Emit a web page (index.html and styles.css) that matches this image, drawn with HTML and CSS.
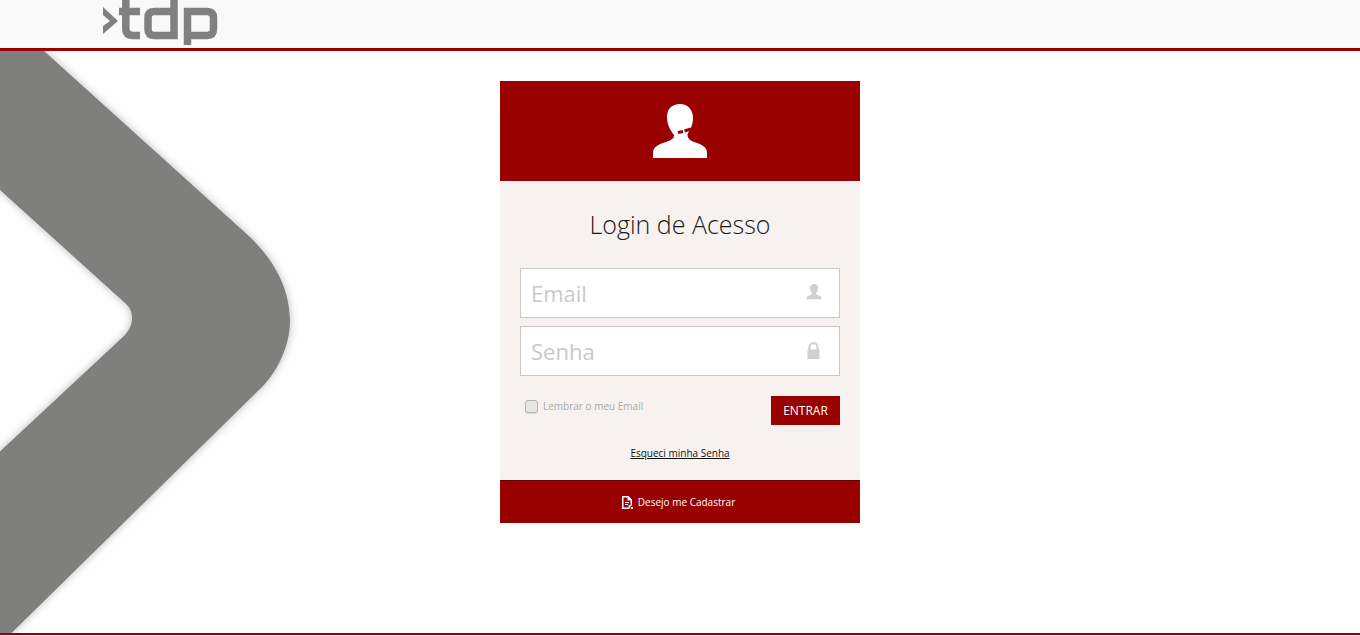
FILE: index.html
```html
<!DOCTYPE html>
<html lang="pt-BR">
<head>
<meta charset="utf-8">
<title>Login de Acesso</title>
<link rel="stylesheet" href="styles.css">
</head>
<body>
<header class="top">
  <svg class="logo" width="116" height="46" viewBox="0 0 116 46" role="img" aria-label="tdp">
    <polygon fill="#808080" points="0,7 15,21 0,34 0,26 7,21 0,15"/>
    <g fill="none" stroke="#808080" stroke-width="7.500">
      <path d="M22.800 -6V28Q22.800 35.500 30 35.500H37"/>
      <line x1="16" y1="11.500" x2="37" y2="11.500"/>
      <path d="M71 -6V35.500H51Q45 35.500 45 29V18Q45 11.500 51 11.500H71"/>
      <path d="M84.500 45V11.500H104Q110.500 11.500 110.500 18V29Q110.500 35.500 104 35.500H84.500"/>
    </g>
  </svg>
</header>
<main class="stage">
  <svg class="chevron" width="310" height="582" viewBox="0 0 310 582" aria-hidden="true">
    <defs>
      <filter id="soft" x="-10%" y="-10%" width="120%" height="120%">
        <feDropShadow dx="0" dy="0" stdDeviation="4" flood-color="#000" flood-opacity="0.28"/>
      </filter>
    </defs>
    <path filter="url(#soft)" fill="#7f7f7d" d="M-20 -10H33L250 186C272 207 290 236 290 270C290 294 278 320 262 336L-20 613V419L125 284C129 279 132 274 132 267C132 260 129 255 125 252L-20 121Z"/>
  </svg>
  <section class="card">
    <div class="card-head">
      <svg width="56" height="56" viewBox="0 0 56 56" aria-hidden="true">
        <path fill="#fff" d="M28 1C36 1 41 7 41 15C41 22 38 27 35.500 31C35.500 35 37 37 42 39C48 41 55 43 55 50V55H1V50C1 43 8 41 14 39C19 37 22 36 22 32C18 27 15 21 15 14C15 6 20 1 28 1Z"/>
        <path fill="none" stroke="#990000" stroke-width="3" d="M26 29.500L31 28.500M32.500 28L39 26"/>
      </svg>
    </div>
    <form class="card-body">
      <h1 class="title">Login de Acesso</h1>
      <label class="field">
        <input class="input" type="text" placeholder="Email">
        <svg class="field-icon" width="16" height="16" viewBox="0 0 16 16" aria-hidden="true"><path fill="#d0d0d0" d="M8 0C10.500 0 12 1.700 12 4C12 6 11 7.800 10 9C10 10.200 11 10.800 12.500 11.300C14.500 12 15.500 12.500 15.500 15.200H.5C.5 12.500 1.500 12 3.500 11.300C5 10.800 6 10.200 6 9C5 7.800 4 6 4 4C4 1.700 5.500 0 8 0Z"/></svg>
      </label>
      <label class="field">
        <input class="input" type="password" placeholder="Senha">
        <svg class="field-icon" width="16" height="18" viewBox="0 0 16 18" aria-hidden="true"><path fill="none" stroke="#d0d0d0" stroke-width="2.200" d="M3.500 8V5.500C3.500 3 5.200 1.200 7.500 1.200S11.500 3 11.500 5.500V8"/><rect x="1.500" y="7.500" width="12" height="9.500" fill="#d0d0d0"/></svg>
      </label>
      <div class="actions">
        <label class="remember"><input class="check" type="checkbox"><span>Lembrar o meu Email</span></label>
        <button class="enter" type="button">ENTRAR</button>
      </div>
      <a class="forgot" href="#">Esqueci minha Senha</a>
    </form>
    <a class="signup" href="#">
      <svg width="11" height="13" viewBox="0 0 11 13" aria-hidden="true"><path fill="#fff" d="M0 0H6.500L10 3.500V9.500H8.500V11.500H7.500V13H0ZM1.500 1.500V11.500H6.500V9H8.500V4.500H5.500V1.500Z"/><path fill="#fff" d="M3 6H7V7H3ZM3 8H6V9H3Z"/><rect x="9" y="11" width="2" height="2" fill="#fff"/></svg>
      <span>Desejo me Cadastrar</span>
    </a>
  </section>
</main>
</body>
</html>
```
FILE: styles.css
```css
* { box-sizing: border-box; }
html, body { height: 100%; }
body {
  margin: 0;
  display: flex;
  flex-direction: column;
  height: 635px;
  overflow: hidden;
  background: #fff;
  font-family: "Open Sans", sans-serif;
}
.top {
  flex: none;
  height: 51px;
  padding-left: 103px;
  background: #f9f9f9;
  border-bottom: 3px solid #990000;
  overflow: hidden;
}
.logo { display: block; }
.stage {
  flex: 1;
  position: relative;
  display: flex;
  justify-content: center;
  align-items: flex-start;
  padding-top: 30px;
  border-bottom: 2px solid #990000;
  overflow: hidden;
}
.chevron { position: absolute; left: 0; top: 0; }
.card { position: relative; width: 360px; }
.card-head {
  height: 100px;
  background: #990000;
  display: flex;
  align-items: center;
  justify-content: center;
}
.card-head svg { display: block; }
.card-body {
  height: 299px;
  padding: 26px 20px 0;
  background: #f7f2f0;
  display: flex;
  flex-direction: column;
}
.title {
  margin: 0 0 27px;
  font-size: 25px;
  line-height: 34px;
  font-weight: 300;
  text-align: center;
  color: #1a1a1a;
}
.field { position: relative; display: block; margin-bottom: 8px; }
.input {
  display: block;
  width: 100%;
  height: 50px;
  padding: 0 40px 0 10px;
  border: 1px solid #c8c6c6;
  background: #fff;
  font: 22px "Open Sans", sans-serif;
  color: #555;
  outline: none;
}
.input::placeholder { color: #c9c9c9; opacity: 1; }
.field-icon { position: absolute; right: 18px; top: 16px; }
.actions {
  display: flex;
  justify-content: space-between;
  align-items: flex-start;
  margin-top: 12px;
}
.remember {
  display: flex;
  align-items: center;
  gap: 5px;
  margin: 3px 0 0 5px;
  font-size: 10px;
  line-height: 14px;
  color: #a9a9a9;
}
.check {
  appearance: none;
  width: 13px;
  height: 13px;
  margin: 0;
  border: 1px solid #b5b5b5;
  border-radius: 3px;
  background: #e6e6e6;
  box-shadow: 0 1px 1px rgba(0,0,0,.1);
}
.enter {
  width: 69px;
  height: 29px;
  padding: 0;
  border: 0;
  background: #990000;
  color: #fff;
  font: 12px "Open Sans", sans-serif;
}
.forgot {
  align-self: center;
  margin-top: 21px;
  font-size: 10px;
  line-height: 14px;
  color: #111;
  text-decoration: underline;
}
.signup {
  height: 43px;
  padding-right: 3px;
  border-top: 1px solid #6f0000;
  background: #990000;
  display: flex;
  align-items: center;
  justify-content: center;
  gap: 5px;
  font-size: 10px;
  color: #fff;
  text-decoration: none;
}
```
